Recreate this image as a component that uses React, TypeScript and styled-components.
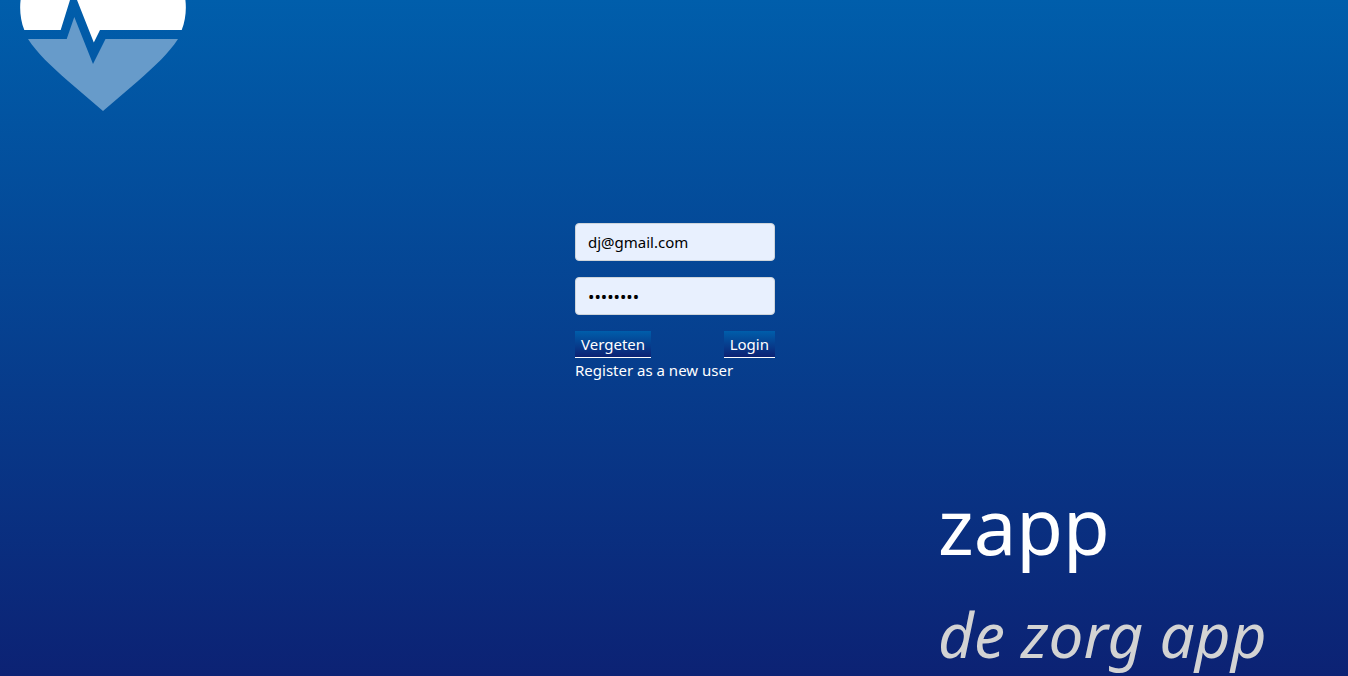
import React from "react";
import styled, { createGlobalStyle } from "styled-components";

const GlobalStyle = createGlobalStyle`
  *, *::before, *::after { box-sizing: border-box; }
  body {
    margin: 0;
    background: #0c2274;
    color: #fff;
    font-family: "Segoe UI", "Noto Sans", "Open Sans", sans-serif;
    font-size: 15px;
    line-height: 24px;
  }
`;

const brandGradient = "linear-gradient(#005eab, #0c2274)";

const Page = styled.div`
  display: flex;
  flex-direction: column;
  min-height: 100vh;
  overflow: hidden;
  background: ${brandGradient};
`;

const Header = styled.header`
  display: flex;
  padding-left: 20px;
`;

const Logo = styled.svg`
  display: block;
  width: 166px;
  height: 111px;
`;

const Main = styled.main`
  display: flex;
  justify-content: center;
  padding: 112px 0 0 2px;
`;

const LoginForm = styled.form`
  display: flex;
  flex-direction: column;
  gap: 16px;
  width: 200px;
`;

const Field = styled.input`
  width: 100%;
  height: 38px;
  padding: 6px 12px;
  border: 1px solid #ced4da;
  border-radius: 4px;
  background: #e8f0fe;
  color: #000;
  font: inherit;

  &[type="password"] {
    font-size: 17px;
  }
`;

const Actions = styled.div`
  display: flex;
  justify-content: space-between;
`;

const ActionButton = styled.button`
  height: 27px;
  padding: 0 6px;
  border: 0;
  border-bottom: 1px solid #fff;
  background: ${brandGradient};
  color: #fff;
  font: inherit;
`;

const Register = styled.a`
  display: block;
  color: #fff;
  text-decoration: none;
`;

const Brand = styled.footer`
  display: flex;
  flex-direction: column;
  gap: 16px;
  width: 410px;
  margin: auto 0 0 auto;
`;

const Name = styled.h1`
  margin: 0;
  font-size: 76px;
  font-weight: 400;
  line-height: 100px;
`;

const Tagline = styled.p`
  margin: 0;
  color: #d3d3d3;
  font-size: 62px;
  font-style: italic;
  line-height: 84px;
`;

export default function App() {
  return (
    <>
      <GlobalStyle />
      <Page>
        <Header>
          <Logo viewBox="0 0 166 111" role="img" aria-label="zapp">
            <path
              fill="#fff"
              d="M.6 0H50L40.700 30H4.300C.6 21-.6 10 .6 0ZM57 0H165.400C166.600 10 165.400 21 161.700 30H80L73.800 42.500Z"
            />
            <path
              fill="#679bca"
              d="M8 39H46.700L54.300 17L73 64L85.500 39H158C149 53 135 66 118 81L83 111L48 81C31 66 17 53 8 39Z"
            />
          </Logo>
        </Header>
        <Main>
          <LoginForm onSubmit={(event) => event.preventDefault()}>
            <Field type="email" aria-label="Email" defaultValue="dj@gmail.com" />
            <Field type="password" aria-label="Password" defaultValue="password" />
            <div>
              <Actions>
                <ActionButton type="button">Vergeten</ActionButton>
                <ActionButton type="submit">Login</ActionButton>
              </Actions>
              <Register href="#register">Register as a new user</Register>
            </div>
          </LoginForm>
        </Main>
        <Brand>
          <Name>zapp</Name>
          <Tagline>de zorg app</Tagline>
        </Brand>
      </Page>
    </>
  );
}
